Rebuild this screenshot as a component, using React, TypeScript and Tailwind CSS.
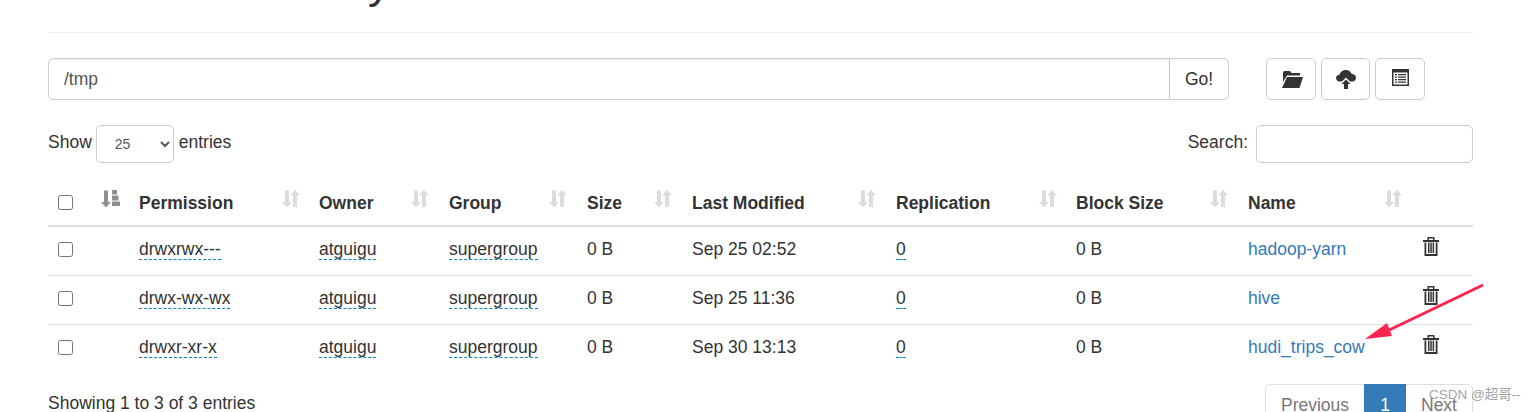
const font = { fontFamily: '"Liberation Sans", Arial, sans-serif' };

const rows = [
  { perm: "drwxrwx---", modified: "Sep 25 02:52", name: "hadoop-yarn" },
  { perm: "drwx-wx-wx", modified: "Sep 25 11:36", name: "hive" },
  { perm: "drwxr-xr-x", modified: "Sep 30 13:13", name: "hudi_trips_cow" },
];

const columns = [
  { label: "Permission", width: "w-[180px]", icon: "right-[11px]" },
  { label: "Owner", width: "w-[130px]", icon: "right-[12px]" },
  { label: "Group", width: "w-[138px]", icon: "right-[12px]" },
  { label: "Size", width: "w-[105px]", icon: "right-[12px]" },
  { label: "Last Modified", width: "w-[204px]", icon: "right-[12px]" },
  { label: "Replication", width: "w-[180px]", icon: "right-[11px]" },
  { label: "Block Size", width: "w-[172px]", icon: "right-[12px]" },
  { label: "Name", width: "w-[175px]", icon: "right-[13px]" },
];

function SortIcon({ className }: { className: string }) {
  return (
    <svg width="18" height="18" viewBox="0 0 18 18" className={`absolute top-[11px] fill-[#dcdcdc] ${className}`}>
      <path d="M3 0.500h4v11.500h3l-5 5.500-5-5.500h3z" />
      <path d="M13 0l5 5.500h-3v11.500h-4V5.500H8z" />
    </svg>
  );
}

function SortActiveIcon() {
  return (
    <svg width="19" height="18" viewBox="0 0 19 18" className="absolute right-[11px] top-[11px] fill-[#8f8f8f]">
      <path d="M3 0.500h4v11.500h3l-5 5.500-5-5.500h3z" />
      <path d="M11 0h5v4.500h-5zM11 5.500h6.500v5H11zM11 11.500h8V16h-8z" />
    </svg>
  );
}

function TrashIcon() {
  return (
    <svg width="16" height="19" viewBox="0 0 16 19" className="fill-[#333]">
      <path d="M4.500 3V0h7v3h-1.500V1.500H6V3z" />
      <path d="M0 3h16v2H0z" />
      <path d="M1.500 5.500h1.800V17h9.400V5.500h1.800V19h-13z" />
      <path d="M5 5.500h1.500V16H5zM7.300 5.500h1.500V16H7.300zM9.600 5.500h1.500V16H9.600z" />
    </svg>
  );
}

function Perm({ children }: { children: string }) {
  return <span className="border-b border-dashed border-[#0088cc]">{children}</span>;
}

export default function App() {
  return (
    <div className="h-[412px] w-[1530px] overflow-hidden bg-white text-[17.5px] leading-[24px] text-[#333]" style={font}>
      <div className="mx-[48px] w-[1425px]">
        <div className="-mt-[44px] border-b border-[#eee] pb-[22px] text-[45px] leading-[54px]">Browse Directory</div>

        <div className="mt-[25px] flex h-[42px]">
          <div className="flex w-[1181px]">
            <input
              readOnly
              value="/tmp"
              className="h-full flex-1 rounded-l-[5px] border border-[#ccc] px-[15px] text-[17.5px] text-[#555] shadow-[inset_0_1px_1px_rgba(0,0,0,0.075)]"
            />
            <button className="-ml-px w-[60px] rounded-r-[5px] border border-[#ccc] bg-white">Go!</button>
          </div>
          <div className="ml-[37px] flex gap-[5px]">
            <button className="flex w-[50px] items-center justify-center rounded-[5px] border border-[#ccc] bg-white pl-[2px]">
              <svg width="22" height="17" viewBox="0 0 22 17" className="fill-[#333]">
                <path d="M2 1.500 3 0h6l1.500 2H19v2.500H6L2 11z" />
                <path d="M6 6h16l-3.500 11H1z" />
              </svg>
            </button>
            <button className="flex w-[49px] items-center justify-center rounded-[5px] border border-[#ccc] bg-white">
              <svg width="20" height="20" viewBox="0 0 20 20" className="fill-[#333]">
                <path d="M10 1c3 0 5 2 5.800 4 2.500 0 4.200 1.500 4.200 3.800 0 2-1.500 3.700-3.500 3.700H14L10 8.500 6 12.500H3.500C1.500 12.500 0 10.800 0 9c0-1.800 1.500-3.200 3.500-3.200C4.200 3 7 1 10 1z" />
                <path d="M10 10.500l4.500 4.500H12V20H8v-5H5.500z" />
              </svg>
            </button>
            <button className="flex w-[50px] items-center justify-center rounded-[5px] border border-[#ccc] bg-white pb-[4px]">
              <svg width="17" height="17" viewBox="0 0 17 17">
                <rect width="17" height="17" className="fill-[#333]" />
                <rect x="1.500" y="3.500" width="14" height="12" className="fill-white" />
                <path d="M3 5h2v1.300H3zM6 5h8v1.300H6zM3 7.500h2v1.300H3zM6 7.500h8v1.300H6zM3 10h2v1.300H3zM6 10h8v1.300H6zM3 12.500h2v1.300H3zM6 12.500h8v1.300H6z" className="fill-[#333]" />
              </svg>
            </button>
          </div>
        </div>

        <div className="mt-[25px] flex h-[38px] items-center justify-between">
          <div className="flex items-center gap-[4px]">
            <span className="-mt-[4px]">Show</span>
            <select className="h-[38px] w-[78px] rounded-[5px] border border-[#ccc] bg-white pl-[14px] text-[14px] text-[#555]">
              <option>25</option>
            </select>
            <span className="-mt-[4px] ml-[1px]">entries</span>
          </div>
          <div className="flex items-center gap-[8px]">
            <span className="-mt-[4px]">Search:</span>
            <input className="h-[38px] w-[217px] rounded-[5px] border border-[#ccc]" />
          </div>
        </div>

        <table className="mt-[16px] w-[1425px] table-fixed border-collapse">
          <thead>
            <tr className="h-[47px] border-b-2 border-[#ddd]">
              <th className="w-[45px] px-[10px] text-left">
                <input type="checkbox" className="block h-[15px] w-[15px]" />
              </th>
              <th className="relative w-[38px]">
                <SortActiveIcon />
              </th>
              {columns.map((c) => (
                <th key={c.label} className={`relative ${c.width} px-[8px] pt-[1px] text-left font-bold`}>
                  {c.label}
                  <SortIcon className={c.icon} />
                </th>
              ))}
              <th className="w-[58px]" />
            </tr>
          </thead>
          <tbody>
            {rows.map((r, i) => (
              <tr key={r.name} className={`h-[49px] ${i < 2 ? "border-b border-[#ddd]" : ""}`}>
                <td className="px-[10px] pb-[2px]">
                  <input type="checkbox" className="block h-[15px] w-[15px]" />
                </td>
                <td />
                <td className="px-[8px] pb-[3px]">
                  <Perm>{r.perm}</Perm>
                </td>
                <td className="px-[8px] pb-[3px]">
                  <Perm>atguigu</Perm>
                </td>
                <td className="px-[8px] pb-[3px]">
                  <Perm>supergroup</Perm>
                </td>
                <td className="px-[8px] pb-[3px]">0 B</td>
                <td className="px-[8px] pb-[3px]">{r.modified}</td>
                <td className="px-[8px] pb-[3px]">
                  <Perm>0</Perm>
                </td>
                <td className="px-[8px] pb-[3px]">0 B</td>
                <td className="px-[8px] pb-[3px] text-[#337ab7]">{r.name}</td>
                <td className="px-[8px] pb-[8px]">
                  <TrashIcon />
                </td>
              </tr>
            ))}
          </tbody>
        </table>

        <div className="mt-[11px] flex items-start justify-between">
          <div className="pt-[7px]">Showing 1 to 3 of 3 entries</div>
          <div className="flex h-[42px] w-[208px] rounded-[5px] border border-[#ddd] text-[#777]">
            <span className="flex w-[98px] items-center justify-center">Previous</span>
            <span className="-my-px flex w-[42px] items-center justify-center bg-[#337ab7] text-white">1</span>
            <span className="flex flex-1 items-center justify-center">Next</span>
          </div>
        </div>
      </div>

      {/* annotation arrow and watermark */}
      <svg width="1530" height="412" className="pointer-events-none absolute left-0 top-0">
        <path d="M1483 285 L1383 333" stroke="#ff2450" strokeWidth="3" fill="none" />
        <path d="M1365 339 L1387 323 L1392 336 Z" fill="#ff2450" />
      </svg>
      <div
        className="absolute left-[1429px] top-[385px] text-[13.5px] leading-[20px] text-[#888]/80"
        style={{ fontFamily: '"Liberation Sans", "Noto Sans CJK SC", sans-serif' }}
      >
        CSDN @超哥--
      </div>
    </div>
  );
}
